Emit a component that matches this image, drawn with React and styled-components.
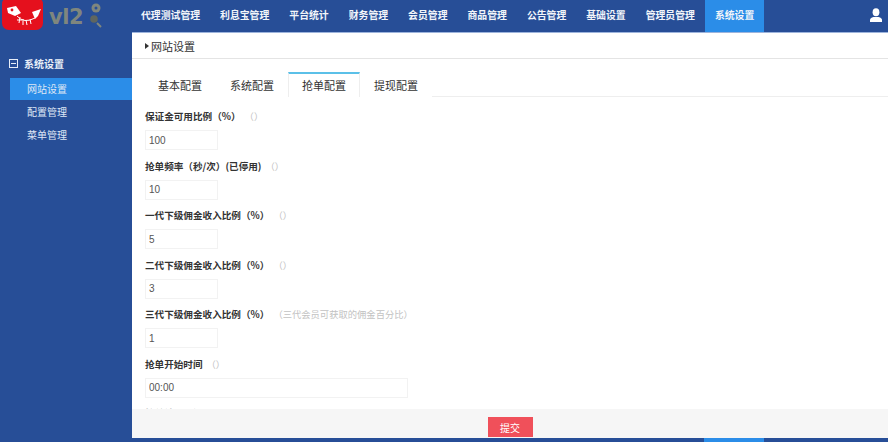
import React from "react";
import styled, { createGlobalStyle } from "styled-components";

const GlobalStyle = createGlobalStyle`
  html, body {
    margin: 0;
    padding: 0;
    height: 100%;
    background: #fff;
    font-family: "Noto Sans CJK SC", "Liberation Sans", sans-serif;
  }
  #root {
    height: 100%;
  }
`;

const navItems = [
  "代理测试管理",
  "利息宝管理",
  "平台统计",
  "财务管理",
  "会员管理",
  "商品管理",
  "公告管理",
  "基础设置",
  "管理员管理",
  "系统设置",
];

const sideItems = ["网站设置", "配置管理", "菜单管理"];
const tabs = ["基本配置", "系统配置", "抢单配置", "提现配置"];

const fields = [
  { label: "保证金可用比例（%）", hint: "（）", value: "100" },
  { label: "抢单频率（秒/次）(已停用)", hint: "（）", value: "10" },
  { label: "一代下级佣金收入比例（%）", hint: "（）", value: "5" },
  { label: "二代下级佣金收入比例（%）", hint: "（）", value: "3" },
  { label: "三代下级佣金收入比例（%）", hint: "（三代会员可获取的佣金百分比）", value: "1" },
  { label: "抢单开始时间", hint: "（）", value: "00:00", wide: true },
  { label: "抢单结束时间", hint: "（）", value: "23:59", wide: true },
];

const Page = styled.div`
  width: 888px;
  height: 442px;
  display: flex;
  flex-direction: column;
  overflow: hidden;
  background: #274e97;
`;

const Header = styled.header`
  height: 32px;
  flex: none;
  display: flex;
  background: #274e97;
`;

const LogoBox = styled.div`
  width: 131px;
  flex: none;
  display: flex;
  align-items: flex-start;
  gap: 5px;
  padding-left: 2px;
  box-sizing: border-box;
`;

const LogoText = styled.span`
  width: 40px;
  margin-right: -4px;
  font-family: "DejaVu Sans", sans-serif;
  font-size: 21px;
  font-weight: 700;
  line-height: 35px;
  letter-spacing: -0.5px;
  color: #7f867e;
`;

const Nav = styled.nav`
  display: flex;
  flex: 1;
`;

const NavItem = styled.div`
  padding: 0 10px;
  line-height: 31px;
  font-size: 9.85px;
  font-weight: 700;
  color: #f2f5fa;
  white-space: nowrap;
  background: ${(p) => (p.$active ? "#2b8de8" : "transparent")};
`;

const UserIcon = styled.div`
  width: 25px;
  display: flex;
  justify-content: center;
  padding-top: 8px;
  box-sizing: border-box;
`;

const Body = styled.div`
  flex: 1;
  min-height: 0;
  display: flex;
`;

const Sidebar = styled.aside`
  width: 132px;
  flex: none;
  padding-top: 20px;
  box-sizing: border-box;
  background: #274e97;
`;

const SideTitle = styled.div`
  display: flex;
  align-items: center;
  gap: 6px;
  height: 22px;
  padding-left: 9px;
  margin-bottom: 4px;
  font-size: 10px;
  font-weight: 700;
  color: #e8eef8;
`;

const SideItem = styled.div`
  height: 22px;
  line-height: 21px;
  margin: 0 0 1px 10px;
  padding-left: 17px;
  font-size: 10px;
  color: #dfe7f5;
  background: ${(p) => (p.$active ? "#2b8de8" : "transparent")};
`;

const Main = styled.main`
  flex: 1;
  min-width: 0;
  display: flex;
  flex-direction: column;
  background: #fff;
  border-top: 1px solid #9db4dc;
`;

const Crumb = styled.div`
  height: 25px;
  flex: none;
  display: flex;
  align-items: center;
  gap: 2px;
  padding-left: 13px;
  font-size: 11px;
  color: #333;
  border-bottom: 1px solid #e4e4e4;
`;

const Arrow = styled.i`
  width: 0;
  height: 0;
  border-left: 4px solid #333;
  border-top: 3px solid transparent;
  border-bottom: 3px solid transparent;
`;

const Content = styled.div`
  flex: 1;
  min-height: 0;
  overflow: hidden;
  padding: 13px 0 0 12px;
`;

const TabRow = styled.div`
  display: flex;
  height: 25px;
  box-sizing: border-box;
  border-bottom: 1px solid #eeeeee;
`;

const Tab = styled.div`
  width: 72px;
  height: 25px;
  box-sizing: border-box;
  text-align: center;
  font-size: 11px;
  line-height: 23px;
  color: #333;
  background: #fff;
  border-top: 2px solid ${(p) => (p.$active ? "#5bc0e8" : "transparent")};
  border-left: 1px solid ${(p) => (p.$active ? "#eeeeee" : "transparent")};
  border-right: 1px solid ${(p) => (p.$active ? "#eeeeee" : "transparent")};
`;

const Form = styled.div`
  padding: 13px 0 0 1px;
`;

const Field = styled.div`
  height: 49.5px;
`;

const LabelRow = styled.div`
  display: flex;
  gap: 4px;
  height: 13px;
  line-height: 13px;
  margin-bottom: 7px;
  font-size: 9.6px;
  white-space: nowrap;
`;

const Label = styled.span`
  font-weight: 700;
  color: #333;
`;

const Hint = styled.span`
  font-size: 9.3px;
  color: #c2c2c2;
`;

const Input = styled.input`
  display: block;
  width: ${(p) => (p.$wide ? "263px" : "73px")};
  height: 20px;
  box-sizing: border-box;
  padding: 0 3px;
  font-family: "Liberation Sans", sans-serif;
  font-size: 10px;
  color: #555;
  background: #fff;
  border: 1px solid #f2f2f2;
  outline: none;
`;

const Footer = styled.div`
  height: 29px;
  flex: none;
  display: flex;
  justify-content: center;
  align-items: flex-end;
  background: #f6f6f6;
`;

const SubmitButton = styled.button`
  width: 45px;
  height: 20px;
  margin-bottom: 1px;
  padding: 0;
  border: none;
  font-family: inherit;
  font-size: 10px;
  color: #fff;
  background: #f0505a;
`;

const BottomStrip = styled.div`
  height: 4px;
  flex: none;
  display: flex;
  padding-left: 704px;
  background: #274e97;
`;

const StripActive = styled.div`
  width: 60px;
  background: #2b8de8;
`;

const Logo = () => (
  <svg width="42" height="31" viewBox="0 0 42 31">
    <rect x="0" y="-3" width="41" height="33" rx="7" fill="#e5101d" />
    <path d="M5 8 L14 6 L19 13 L13 16 L6 13 Z" fill="#fff" />
    <circle cx="10" cy="10" r="1.4" fill="#e5101d" />
    <path d="M39 9 L30 12 L33 19 L36 16 Z" fill="#fff" />
    <path
      d="M15 16 Q22 24 33 18 M18 17 L17 23 M21 19 L21 25 M24 20 L25 25 M28 19 L29 24 M15 20 L20 20"
      fill="none"
      stroke="#fff"
      strokeWidth="1"
    />
  </svg>
);

const LogoMark = () => (
  <svg width="16" height="28" viewBox="0 0 16 28">
    <circle cx="6" cy="8" r="4.5" fill="#7f867e" />
    <circle cx="6" cy="8" r="1.5" fill="#274e97" />
    <circle cx="4" cy="19" r="3.8" fill="#5f665f" />
    <path d="M7 23 L11 27" stroke="#7f867e" strokeWidth="2" fill="none" />
  </svg>
);

const User = () => (
  <svg width="14" height="14" viewBox="0 0 14 14" fill="#fff">
    <ellipse cx="7" cy="4.2" rx="3.4" ry="4" />
    <path d="M1 14 V12 Q1 10 4.5 9 H9.5 Q13 10 13 12 V14 Z" />
  </svg>
);

const Collapse = () => (
  <svg width="9" height="9" viewBox="0 0 9 9" fill="none" stroke="#e8eef8">
    <rect x="0.5" y="0.5" width="8" height="8" />
    <path d="M2 4.5 H7" />
  </svg>
);

export default function App() {
  return (
    <>
      <GlobalStyle />
      <Page>
        <Header>
          <LogoBox>
            <Logo />
            <LogoText>vl2</LogoText>
            <LogoMark />
          </LogoBox>
          <Nav>
            {navItems.map((item, i) => (
              <NavItem key={item} $active={i === navItems.length - 1}>
                {item}
              </NavItem>
            ))}
          </Nav>
          <UserIcon>
            <User />
          </UserIcon>
        </Header>
        <Body>
          <Sidebar>
            <SideTitle>
              <Collapse />
              系统设置
            </SideTitle>
            {sideItems.map((item, i) => (
              <SideItem key={item} $active={i === 0}>
                {item}
              </SideItem>
            ))}
          </Sidebar>
          <Main>
            <Crumb>
              <Arrow />
              网站设置
            </Crumb>
            <Content>
              <TabRow>
                {tabs.map((tab, i) => (
                  <Tab key={tab} $active={i === 2}>
                    {tab}
                  </Tab>
                ))}
              </TabRow>
              <Form>
                {fields.map((f) => (
                  <Field key={f.label}>
                    <LabelRow>
                      <Label>{f.label}</Label>
                      <Hint>{f.hint}</Hint>
                    </LabelRow>
                    <Input $wide={f.wide} defaultValue={f.value} />
                  </Field>
                ))}
              </Form>
            </Content>
            <Footer>
              <SubmitButton>提交</SubmitButton>
            </Footer>
          </Main>
        </Body>
        <BottomStrip>
          <StripActive />
        </BottomStrip>
      </Page>
    </>
  );
}
